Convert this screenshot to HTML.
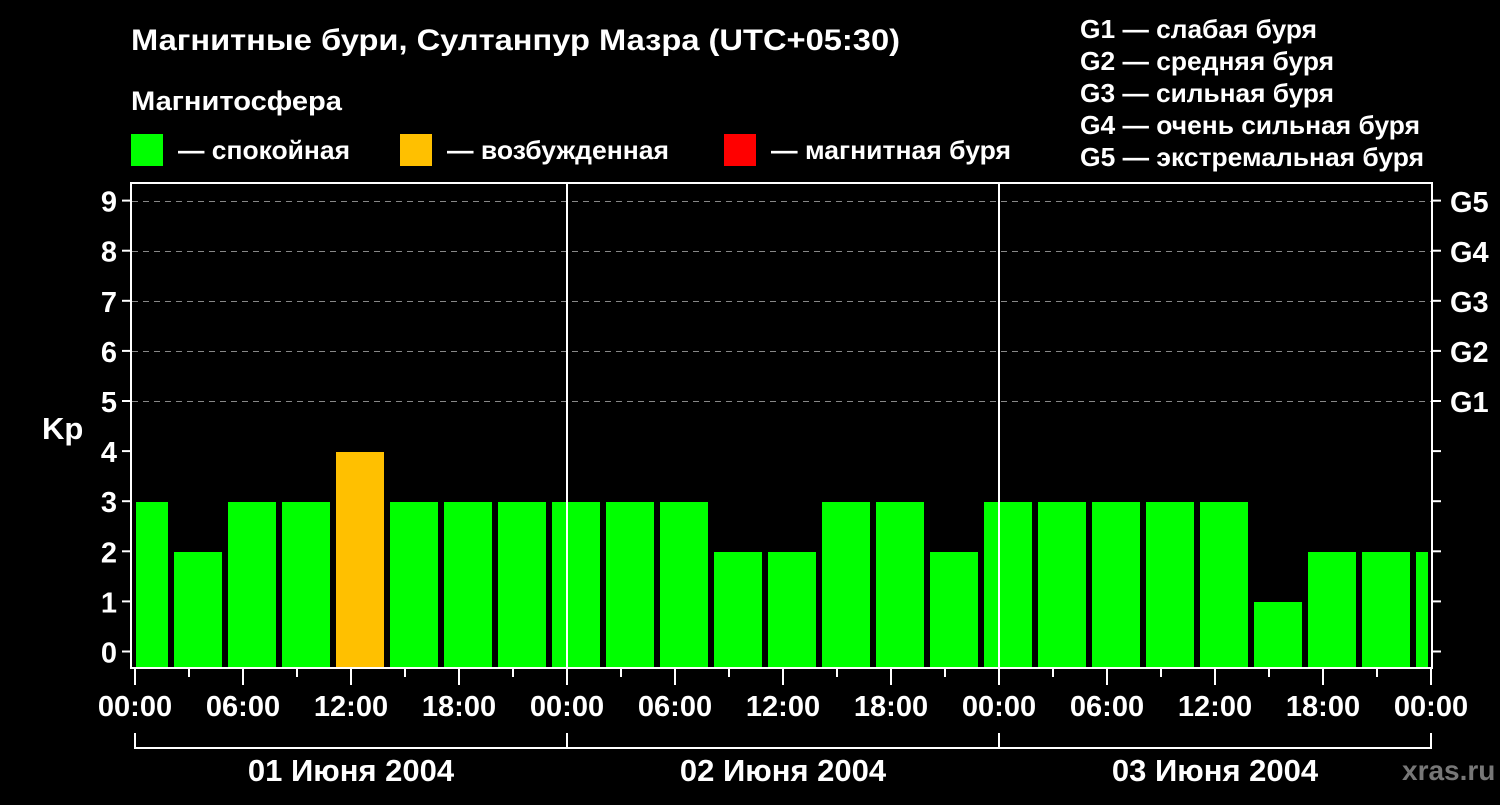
<!DOCTYPE html>
<html><head><meta charset="utf-8"><style>
body{margin:0;background:#000;width:1500px;height:800px;overflow:hidden;font-family:"Liberation Sans",sans-serif}
svg text{font-family:"Liberation Sans",sans-serif;font-weight:bold;fill:#fff}
</style></head><body>
<svg width="1500" height="800" xmlns="http://www.w3.org/2000/svg">
<rect width="1500" height="800" fill="#000"/>
<text x="131" y="50" font-size="30" textLength="769" lengthAdjust="spacingAndGlyphs">Магнитные бури, Султанпур Мазра (UTC+05:30)</text>
<text x="131" y="110" font-size="27" textLength="211" lengthAdjust="spacingAndGlyphs">Магнитосфера</text>
<rect x="131" y="134" width="32" height="32" fill="#00ff00"/>
<text x="178" y="159" font-size="26" textLength="172" lengthAdjust="spacingAndGlyphs">— спокойная</text>
<rect x="400" y="134" width="32" height="32" fill="#ffc000"/>
<text x="447" y="159" font-size="26" textLength="222" lengthAdjust="spacingAndGlyphs">— возбужденная</text>
<rect x="724" y="134" width="32" height="32" fill="#ff0000"/>
<text x="771" y="159" font-size="26" textLength="240" lengthAdjust="spacingAndGlyphs">— магнитная буря</text>
<g font-size="26">
<text x="1080" y="38" textLength="237" lengthAdjust="spacingAndGlyphs">G1 — слабая буря</text>
<text x="1080" y="70" textLength="254" lengthAdjust="spacingAndGlyphs">G2 — средняя буря</text>
<text x="1080" y="102" textLength="254" lengthAdjust="spacingAndGlyphs">G3 — сильная буря</text>
<text x="1080" y="134" textLength="340" lengthAdjust="spacingAndGlyphs">G4 — очень сильная буря</text>
<text x="1080" y="166" textLength="344" lengthAdjust="spacingAndGlyphs">G5 — экстремальная буря</text>
</g>
<g stroke="#888" stroke-width="1" stroke-dasharray="6,5">
<line x1="132" y1="201.5" x2="1432" y2="201.5"/>
<line x1="132" y1="251.5" x2="1432" y2="251.5"/>
<line x1="132" y1="301.5" x2="1432" y2="301.5"/>
<line x1="132" y1="351.5" x2="1432" y2="351.5"/>
<line x1="132" y1="401.5" x2="1432" y2="401.5"/>
</g>
<g id="bars"></g>
<g stroke="#fff" stroke-width="2" fill="none">
<line x1="131" y1="183" x2="1433" y2="183"/>
<line x1="131" y1="182" x2="131" y2="669"/>
<line x1="1432" y1="182" x2="1432" y2="669"/>
<line x1="131" y1="668" x2="1433" y2="668"/>
<line x1="567" y1="183" x2="567" y2="668"/>
<line x1="999" y1="183" x2="999" y2="668"/>
<path d="M135 733V748H1431V733M567 733V748M999 733V748"/>
</g>
<g id="ticks" stroke="#fff" stroke-width="2"></g>
<g font-size="29" text-anchor="end" id="yl"></g>
<text x="42" y="439" font-size="31">Kp</text>
<g font-size="29" id="gl">
<text x="1450" y="212">G5</text><text x="1450" y="262">G4</text><text x="1450" y="312">G3</text><text x="1450" y="362">G2</text><text x="1450" y="412">G1</text>
</g>
<g font-size="29" text-anchor="middle" id="xl"></g>
<g font-size="31" text-anchor="middle">
<text x="351" y="781">01 Июня 2004</text>
<text x="783" y="781">02 Июня 2004</text>
<text x="1215" y="781">03 Июня 2004</text>
</g>
<text x="1402" y="780" font-size="28" style="fill:#777">xras.ru</text>
</svg>
<script>
(function(){
var ns="http://www.w3.org/2000/svg";
function el(p,t,a,txt){var e=document.createElementNS(ns,t);for(var k in a)e.setAttribute(k,a[k]);if(txt!=null)e.textContent=txt;document.getElementById(p).appendChild(e);}
var v=[3,2,3,3,4,3,3,3,3,3,3,2,2,3,3,2,3,3,3,3,3,1,2,2,2];
for(var i=0;i<v.length;i++){var x=120+54*i,w=48;if(i==0){x=136;w=32;}if(i==24){w=12;}
var ty=Math.round(652-50.1*v[i]);el("bars","rect",{x:x,y:ty,width:w,height:668-ty,fill:v[i]>=4?"#ffc000":"#00ff00"});}
for(var k=0;k<=9;k++){var y=651.5-50.1*k;el("ticks","line",{x1:122,y1:y,x2:131,y2:y});el("ticks","line",{x1:1432,y1:y,x2:1441,y2:y});el("yl","text",{x:117,y:y+11},k);}
var lab=["00:00","06:00","12:00","18:00"];
for(var j=0;j<=24;j++){var x=135+54*j;el("ticks","line",{x1:x,y1:668,x2:x,y2:j%2?677:685});if(j%2==0)el("xl","text",{x:x,y:716},lab[(j/2)%4]);}
})();
</script>
</body></html>
